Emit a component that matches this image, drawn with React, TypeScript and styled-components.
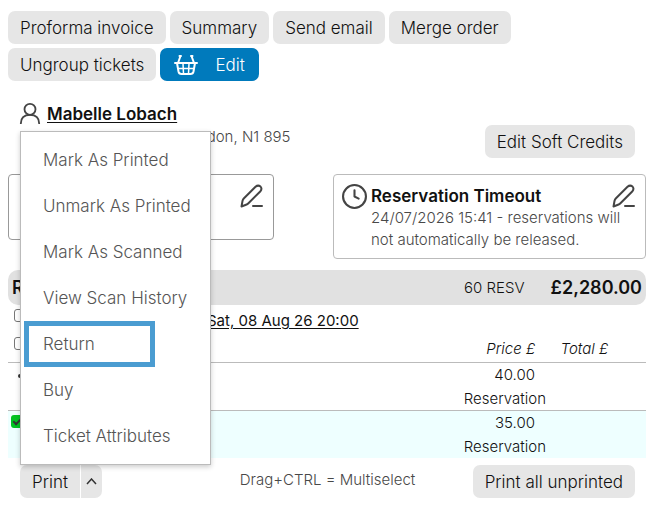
import React from 'react';
import styled, { createGlobalStyle, css } from 'styled-components';

const Global = createGlobalStyle`
  *, *::before, *::after { box-sizing: border-box; }
  body { margin: 0; background: #fff; color: #111; font-family: Inter, "Open Sans", sans-serif; font-size: 15px; font-weight: 300; line-height: 24px; }
  button { font: inherit; color: inherit; border: 0; margin: 0; padding: 0; background: none; cursor: pointer; }
  a { color: inherit; text-underline-offset: 2px; }
`;

const Page = styled.main`
  padding: 11px 20px 11px 8px;
`;

const Toolbar = styled.div`
  display: flex;
  flex-wrap: wrap;
  gap: 4px;
  max-width: 520px;
`;

const Button = styled.button<{ $primary?: boolean }>`
  && {
    display: inline-flex;
    align-items: center;
    justify-content: center;
    gap: 17px;
    height: 33px;
    padding: 0 ${p => (p.$primary ? '14px' : '12px')};
    border-radius: 7px;
    background: ${p => (p.$primary ? '#007abc' : '#e6e6e6')};
    color: ${p => (p.$primary ? '#fff' : '#111')};
    font-size: 17px;
    white-space: nowrap;
  }
`;

const Customer = styled.section`
  display: flex;
  align-items: flex-start;
  padding: 0 11px;
  margin-top: 21px;
  height: 72px;
`;

const CustomerText = styled.div`
  flex: 1;
  margin-left: 6px;
`;

const CustomerName = styled.a`
  display: block;
  width: fit-content;
  font-size: 17px;
  font-weight: 600;
  line-height: 24px;
  color: #111;
`;

const Muted = styled.p`
  margin: 0;
  color: #484848;
  line-height: 22px;
`;

const SoftCredits = styled.div`
  margin-top: 23px;
`;

const Cards = styled.div`
  display: grid;
  grid-template-columns: 266fr 313fr;
  align-items: start;
  gap: 59px;
`;

const Card = styled.section<{ $dark?: boolean }>`
  display: flex;
  align-items: flex-start;
  gap: 4px;
  min-height: 66px;
  padding: 9px 8px 7px 8px;
  border: 1px solid ${p => (p.$dark ? '#999' : '#bbb')};
  border-radius: 4px;
`;

const CardBody = styled.div`
  flex: 1;
  min-width: 0;
`;

const CardHead = styled.div`
  display: flex;
  align-items: flex-start;
  justify-content: space-between;
  height: 23px;
  padding-right: 1px;
`;

const CardTitle = styled.h2`
  margin: 0;
  font-size: 17px;
  font-weight: 600;
  line-height: 24px;
`;

const IconButton = styled.button`
  display: flex;
  margin-left: auto;
`;

const Band = styled.header`
  display: flex;
  align-items: center;
  height: 35px;
  margin-top: 11px;
  padding: 0 4px;
  border-radius: 10px;
  background: #e1e1e1;
`;

const BandTitle = styled.h2`
  flex: 1;
  margin: 0;
  font-size: 18px;
  font-weight: 600;
`;

const BandTotal = styled.strong`
  margin-left: 26px;
  font-size: 18px;
  font-weight: 600;
`;

const EventRow = styled.div`
  display: flex;
  align-items: flex-start;
  height: 29px;
  padding: 4px 0 0 6px;
`;

const EventLink = styled.a`
  margin-left: 180px;
  font-weight: 400;
  color: #111;
`;

const Tick = styled.input<{ $green?: boolean }>`
  appearance: none;
  flex: none;
  display: block;
  width: 13px;
  height: 13px;
  margin: 0;
  border: 1px solid #767676;
  border-radius: 3px;
  background: #fff;
  ${p =>
    p.$green &&
    css`
      border: 0;
      background: #00c322;
      &::after {
        content: '';
        display: block;
        width: 5px;
        height: 9px;
        margin: 1px 4px;
        border: solid #333;
        border-width: 0 2px 2px 0;
        transform: rotate(45deg);
      }
    `}
`;

const Tickets = styled.table`
  width: 100%;
  border-collapse: collapse;
  table-layout: fixed;
  th, td { padding: 0; text-align: right; vertical-align: top; line-height: 23px; }
  th { height: 28px; font-weight: 300; font-style: italic; padding-top: 3px; }
  th:first-child, td:first-child { text-align: left; }
`;

const Col = styled.col<{ $width?: number }>`
  width: ${p => (p.$width ? `${p.$width}px` : 'auto')};
`;

const TicketRow = styled.tr<{ $selected?: boolean }>`
  height: 48px;
  border-top: 1px solid #bbb;
  background: ${p => (p.$selected ? '#eeffff' : 'transparent')};
`;

const SelectCell = styled.td`
  && { padding: 4px 3px; }
`;

const HeadTick = styled.div`
  padding-left: 6px;
`;

const Price = styled.div`
  padding-right: 11px;
  line-height: 24px;
`;

const Bullet = styled.span`
  display: block;
  width: 4px;
  height: 4px;
  margin: 7px;
  border-radius: 50%;
  background: #333;
`;

const Footer = styled.footer`
  display: grid;
  grid-template-columns: 1fr auto 1fr;
  padding: 0 11px 0 12px;
  margin-top: 7px;
`;

const Hint = styled(Muted)`
  padding-top: 4px;
`;

const PrintAll = styled.div`
  justify-self: end;
`;

const Split = styled.div`
  position: relative;
  display: flex;
  gap: 1px;
  ${Button}:first-child { border-radius: 7px 0 0 7px; }
  ${Button}:nth-child(2) { padding: 0 5px; border-radius: 0 7px 7px 0; }
`;

const Menu = styled.div`
  position: absolute;
  left: 0;
  bottom: 33px;
  width: 191px;
  padding: 5px 3px;
  border: 1px solid #bbb;
  background: #fff;
  box-shadow: 0 2px 5px rgba(0, 0, 0, 0.2);
`;

const MenuItem = styled.button<{ $marked?: boolean }>`
  && {
    display: block;
    width: ${p => (p.$marked ? '131px' : '100%')};
    height: 46px;
    padding-left: ${p => (p.$marked ? '14px' : '19px')};
    border: ${p => (p.$marked ? '5px solid #4a9cd1' : '0')};
    color: #555;
    font-size: 17px;
    text-align: left;
    white-space: nowrap;
  }
`;

const Svg = ({ size = 24, children }: { size?: number; children: React.ReactNode }) => (
  <svg width={size} height={size} viewBox="0 0 24 24" fill="none" stroke="#444" strokeWidth="2" strokeLinecap="round" strokeLinejoin="round" aria-hidden="true">
    {children}
  </svg>
);

const Basket = () => (
  <svg width="24" height="20" viewBox="0 0 24 20" fill="none" stroke="#fff" strokeWidth="2" strokeLinecap="round" strokeLinejoin="round" aria-hidden="true">
    <path d="M1 8h22M3 8l1.500 8.500q.5 2.500 3 2.500h9q2.500 0 3-2.500L21 8M6.500 1L4 8M17.500 1L20 8M5.500 1h1.500M18.500 1H17" />
    <path strokeWidth="1.500" d="M4.500 13.500h15M9 8.500l.5 10M15 8.500l-.5 10" />
  </svg>
);

const Pencil = () => (
  <Svg>
    <path d="M1.500 22.500l1-5.500q.3-1.500 1.500-2.700L15.500 2.800q2.500-2.200 5-.3 2 2.500-.3 5L8.700 19q-1.200 1.200-2.700 1.800zM13 22h9" />
  </Svg>
);

const actions = ['Mark As Printed', 'Unmark As Printed', 'Mark As Scanned', 'View Scan History', 'Return', 'Buy', 'Ticket Attributes'];

export default function App() {
  return (
    <Page>
      <Global />
      <Toolbar>
        <Button>Proforma invoice</Button>
        <Button>Summary</Button>
        <Button>Send email</Button>
        <Button>Merge order</Button>
        <Button>Ungroup tickets</Button>
        <Button $primary><Basket />Edit</Button>
      </Toolbar>

      <Customer>
        <Svg size={22}>
          <circle cx="12" cy="8" r="6" />
          <path d="M2 23.500q0-9.500 10-9.500t10 9.500" />
        </Svg>
        <CustomerText>
          <CustomerName href="#customer">Mabelle Lobach</CustomerName>
          <Muted>305 Santok Grove, London, N1 895</Muted>
        </CustomerText>
        <SoftCredits><Button>Edit Soft Credits</Button></SoftCredits>
      </Customer>

      <Cards>
        <Card $dark>
          <CardBody>
            <CardHead>
              <IconButton aria-label="Edit details"><Pencil /></IconButton>
            </CardHead>
          </CardBody>
        </Card>
        <Card>
          <Svg size={25}>
            <circle cx="12" cy="12" r="11" />
            <path d="M12 6v6l4 2" />
          </Svg>
          <CardBody>
            <CardHead>
              <CardTitle>Reservation Timeout</CardTitle>
              <IconButton aria-label="Edit reservation timeout"><Pencil /></IconButton>
            </CardHead>
            <Muted>24/07/2026 15:41 - reservations will not automatically be released.</Muted>
          </CardBody>
        </Card>
      </Cards>

      <Band>
        <BandTitle>R</BandTitle>
        <span>60 RESV</span>
        <BandTotal>£2,280.00</BandTotal>
      </Band>
      <EventRow>
        <Tick type="checkbox" aria-label="Select event" />
        <EventLink href="#event">Sat, 08 Aug 26 20:00</EventLink>
      </EventRow>
      <Tickets>
        <colgroup>
          <Col />
          <Col $width={120} />
          <Col $width={62} />
          <Col $width={38} />
        </colgroup>
        <thead>
          <tr>
            <th><HeadTick><Tick type="checkbox" aria-label="Select all tickets" /></HeadTick></th>
            <th><Price>Price £</Price></th>
            <th>Total £</th>
            <th />
          </tr>
        </thead>
        <tbody>
          <TicketRow>
            <SelectCell><Bullet /></SelectCell>
            <td><Price>40.00</Price>Reservation</td>
            <td /><td />
          </TicketRow>
          <TicketRow $selected>
            <SelectCell><Tick $green type="checkbox" defaultChecked aria-label="Select ticket" /></SelectCell>
            <td><Price>35.00</Price>Reservation</td>
            <td /><td />
          </TicketRow>
        </tbody>
      </Tickets>

      <Footer>
        <Split>
          <Button>Print</Button>
          <Button aria-label="More print actions" aria-expanded="true">
            <svg width="11" height="7" viewBox="0 0 11 7" fill="none" stroke="#333" strokeWidth="1.500" aria-hidden="true"><path d="M1 6l4.500-5L10 6" /></svg>
          </Button>
          <Menu role="menu">
            {actions.map(a => (
              <MenuItem key={a} role="menuitem" $marked={a === 'Return'}>{a}</MenuItem>
            ))}
          </Menu>
        </Split>
        <Hint>Drag+CTRL = Multiselect</Hint>
        <PrintAll><Button>Print all unprinted</Button></PrintAll>
      </Footer>
    </Page>
  );
}
